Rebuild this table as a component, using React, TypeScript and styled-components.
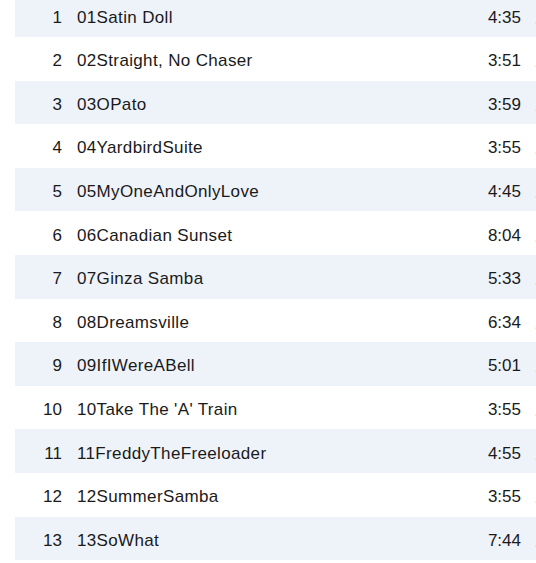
import { createGlobalStyle, styled } from 'styled-components';

const tracks = [
  { no: 1, title: '01Satin Doll', time: '4:35' },
  { no: 2, title: '02Straight, No Chaser', time: '3:51' },
  { no: 3, title: '03OPato', time: '3:59' },
  { no: 4, title: '04YardbirdSuite', time: '3:55' },
  { no: 5, title: '05MyOneAndOnlyLove', time: '4:45' },
  { no: 6, title: '06Canadian Sunset', time: '8:04' },
  { no: 7, title: '07Ginza Samba', time: '5:33' },
  { no: 8, title: '08Dreamsville', time: '6:34' },
  { no: 9, title: '09IfIWereABell', time: '5:01' },
  { no: 10, title: "10Take The 'A' Train", time: '3:55' },
  { no: 11, title: '11FreddyTheFreeloader', time: '4:55' },
  { no: 12, title: '12SummerSamba', time: '3:55' },
  { no: 13, title: '13SoWhat', time: '7:44' },
];

const GlobalStyle = createGlobalStyle`
  html, body {
    margin: 0;
    padding: 0;
    background: #ffffff;
    overflow: hidden;
  }
  body {
    font-family: "Liberation Sans", Arial, sans-serif;
  }
`;

const App = () => (
  <>
    <GlobalStyle />
    <SList>
      {tracks.map(t => (
        <SRow key={t.no} $striped={t.no % 2 === 1}>
          <SNo>{t.no}</SNo>
          <STitle>{t.title}</STitle>
          <STime>{t.time}</STime>
          <SMore>…</SMore>
        </SRow>
      ))}
    </SList>
  </>
);

const SList = styled.ul`
  list-style: none;
  margin: -6.6px 0 0 15px;
  padding: 0;
  width: 530px;
`;

const SRow = styled.li<{ $striped: boolean }>`
  display: grid;
  grid-template-columns: 47px 1fr auto 9px;
  column-gap: 15px;
  align-items: center;
  height: 43.6px;
  box-sizing: border-box;
  padding-top: 5px;
  background: ${props => (props.$striped ? '#eef3fa' : '#ffffff')};
  font-size: 17px;
  color: #1a1a1a;
`;

const SNo = styled.span`
  text-align: right;
`;

const STitle = styled.span`
  white-space: nowrap;
  overflow: hidden;
  letter-spacing: 0.35px;
`;

const STime = styled.span`
  text-align: right;
`;

const SMore = styled.span`
  margin-left: -2px;
  padding-top: 4px;
  color: #f3b458;
  font-size: 12px;
  opacity: 0.6;
`;

export default App;
